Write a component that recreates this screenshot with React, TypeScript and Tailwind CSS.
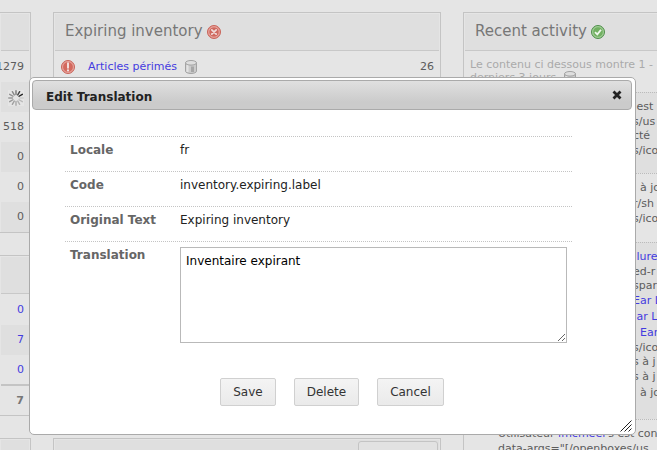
import type { ReactNode } from "react";

function Panel({ children, className = "" }: { children?: ReactNode; className?: string }) {
  return (
    <section className={`shrink-0 border border-[#c4c4c4] px-px pt-px ${className}`}>{children}</section>
  );
}

function PanelHeader({ title, icon }: { title?: string; icon?: ReactNode }) {
  return (
    <header className="mb-px flex h-[37px] items-center gap-1 border-b border-[#c8c8c8] bg-[#dfdfdf] px-[10px]">
      {title && <h2 className="pb-[2px] text-[15px] whitespace-nowrap text-[#777]">{title}</h2>}
      {icon}
    </header>
  );
}

function ErrorIcon() {
  return (
    <svg className="size-[14px] shrink-0" viewBox="0 0 14 14" aria-hidden="true">
      <circle cx="7" cy="7" r="6.5" fill="#e08a80" stroke="#c8645a" />
      <circle cx="7" cy="7" r="5.2" fill="#cf6a60" stroke="#eab0aa" strokeWidth=".8" />
      <path d="M4.8 4.8l4.4 4.4M9.2 4.8L4.8 9.2" stroke="#f1dcda" strokeWidth="1.7" strokeLinecap="round" />
    </svg>
  );
}

function AlertIcon() {
  return (
    <svg className="size-[14px] shrink-0" viewBox="0 0 14 14" aria-hidden="true">
      <circle cx="7" cy="7" r="6.5" fill="#e08a80" stroke="#c8645a" />
      <circle cx="7" cy="7" r="5.4" fill="#d3695e" stroke="#eab0aa" strokeWidth=".8" />
      <path d="M7 3.2v4.6" stroke="#f4e4e2" strokeWidth="1.9" strokeLinecap="round" />
      <circle cx="7" cy="10.4" r="1.1" fill="#f4e4e2" />
    </svg>
  );
}

function AcceptIcon() {
  return (
    <svg className="size-[14px] shrink-0" viewBox="0 0 14 14" aria-hidden="true">
      <circle cx="7" cy="7" r="6.5" fill="#8fc084" stroke="#4f8f4a" />
      <circle cx="7" cy="7" r="5.3" fill="#72b062" stroke="#a9d39f" strokeWidth=".8" />
      <path d="M4 7.2l2.3 2.2L10 4.8" fill="none" stroke="#eef6ec" strokeWidth="1.8" />
    </svg>
  );
}

function DatabaseIcon({ className = "" }: { className?: string }) {
  return (
    <svg className={`inline-block h-[14px] w-[12px] shrink-0 ${className}`} viewBox="0 0 12 14" aria-hidden="true">
      <path d="M.5 2.8v8.4c0 1.2 2.4 2.3 5.5 2.3s5.5-1.1 5.5-2.3V2.8z" fill="#cbcbcb" stroke="#a3a3a3" />
      <path d="M2.500 5v7" stroke="#e4e4e4" strokeWidth="2" />
      <path d="M7.500 6.500v5.500" stroke="#a6a6a6" strokeWidth="3" />
      <ellipse cx="6" cy="2.8" rx="5.5" ry="2.3" fill="#dedede" stroke="#a3a3a3" />
    </svg>
  );
}

const spokes = [
  { angle: 0, color: "#777" },
  { angle: 30, color: "#444" },
  { angle: 60, color: "#222" },
  { angle: 90, color: "#ccc" },
  { angle: 120, color: "#bbb" },
  { angle: 150, color: "#b0b0b0" },
  { angle: 180, color: "#a8a8a8" },
  { angle: 210, color: "#a0a0a0" },
  { angle: 240, color: "#999" },
  { angle: 270, color: "#999" },
  { angle: 300, color: "#909090" },
  { angle: 330, color: "#888" },
];

function Spinner() {
  return (
    <svg className="size-4 shrink-0" viewBox="0 0 16 16" aria-hidden="true">
      <rect width="16" height="16" fill="#e5e5e5" />
      {spokes.map((s) => (
        <path
          key={s.angle}
          d="M8 .7v3.8"
          stroke={s.color}
          strokeWidth="1.4"
          strokeLinecap="round"
          transform={`rotate(${s.angle} 8 8)`}
        />
      ))}
    </svg>
  );
}

function CountRow({ children, className = "h-[30px]" }: { children: ReactNode; className?: string }) {
  return (
    <tr className={`${className} even:bg-[#dfdfdf]`}>
      <td>
        <div className="flex justify-end pt-px pr-[5px]">{children}</div>
      </td>
    </tr>
  );
}

const link = "text-[#443be0]";

function StockColumn() {
  return (
    <div className="flex w-[31px] shrink-0 flex-col gap-[22px] overflow-hidden">
      <Panel className="border-l-0">
        <PanelHeader />
        <table className="w-full table-fixed border-collapse">
          <tbody>
            <CountRow>1279</CountRow>
            <CountRow><Spinner /></CountRow>
            <CountRow>518</CountRow>
            <CountRow>0</CountRow>
            <CountRow>0</CountRow>
            <CountRow>0</CountRow>
          </tbody>
        </table>
      </Panel>
      <Panel className="border-l-0">
        <PanelHeader />
        <table className="w-full table-fixed border-collapse">
          <tbody>
            <CountRow><a href="#" className={link}>0</a></CountRow>
            <CountRow><a href="#" className={link}>7</a></CountRow>
            <CountRow className="h-[29px]"><a href="#" className={link}>0</a></CountRow>
          </tbody>
        </table>
        <div className="flex h-[31px] items-center justify-end border-t-2 border-[#c4c4c4] pt-px pr-[5px] font-bold text-[#777]">7</div>
      </Panel>
      <Panel className="border-l-0">
        <PanelHeader />
      </Panel>
    </div>
  );
}

function InventoryColumn() {
  return (
    <div className="flex min-w-0 flex-1 flex-col gap-[22px]">
      <Panel className="h-[404px]">
        <PanelHeader title="Expiring inventory" icon={<ErrorIcon />} />
        <div className="flex h-[30px] items-center pr-[5px] pl-[6px]">
          <AlertIcon />
          <a href="#" className={`ml-[13px] mr-[8px] whitespace-nowrap ${link}`}>Articles périmés</a>
          <DatabaseIcon />
          <span className="ml-auto pt-px">26</span>
        </div>
      </Panel>
      <Panel>
        <div className="flex h-[37px] justify-end bg-[#dfdfdf] px-px pt-px">
          <select aria-label="Filtre" className="h-6 w-20 appearance-none rounded-[3px] border border-[#c4c4c4] bg-[#e2e2e2]" />
        </div>
      </Panel>
    </div>
  );
}

type Line = { text: string; tall?: boolean; href?: boolean };

const entries: { size: string; lines: Line[] }[] = [
  {
    size: "min-h-[81px] bg-[#dfdfdf]",
    lines: [
      { text: "\u00a0est", tall: true },
      { text: "s/us" },
      { text: "cté" },
      { text: "s/ico", tall: true },
    ],
  },
  {
    size: "min-h-[69px]",
    lines: [
      { text: "\u00a0 à jo", tall: true },
      { text: "r/sh", tall: true },
      { text: "s/ico" },
    ],
  },
  {
    size: "min-h-[177px] bg-[#dfdfdf]",
    lines: [
      { text: "\u00a0lure", tall: true, href: true },
      { text: "ed-r" },
      { text: "spar" },
      { text: "Ear L", tall: true, href: true },
      { text: "\u00a0ar L", tall: true, href: true },
      { text: "\u00a0 Ear", tall: true, href: true },
      { text: "s/ico" },
      { text: "s à j" },
      { text: "s à j", tall: true },
      { text: "\u00a0 à jo", tall: true },
    ],
  },
];

function ActivityColumn() {
  return (
    <div className="w-[194px] shrink-0 overflow-hidden">
      <Panel className="min-h-full border-r-0 pr-0">
        <PanelHeader title="Recent activity" icon={<AcceptIcon />} />
        <p className="h-[40px] overflow-hidden pt-[6px] pl-[5px] leading-[13px] whitespace-nowrap text-[#aaa]">
          Le contenu ci dessous montre 1 -
          <br />
          derniers 3 jours <DatabaseIcon className="ml-1" />
        </p>
        <ul>
          {entries.map((entry, i) => (
            <li key={i} className={`border-t border-dotted border-[#bbb] pt-[6px] pl-[168px] ${entry.size}`}>
              {entry.lines.map((line, j) => (
                <div key={j} className={`whitespace-nowrap ${line.tall ? "leading-[16px]" : "leading-[14px]"}`}>
                  {line.href ? <a href="#" className={link}>{line.text}</a> : line.text}
                </div>
              ))}
            </li>
          ))}
          <li className="border-t border-dotted border-[#bbb] pt-[6px] pl-[33px] whitespace-nowrap">
            <div className="leading-[16px]">
              Utilisateur <a href="#" className={link}>imcmeel</a>'s est con
            </div>
            <div className="leading-[14px]">data-args="[/openboxes/us</div>
          </li>
        </ul>
      </Panel>
    </div>
  );
}

const cell = "flex min-h-[35px] border-t border-dotted border-[#c4c4c4] px-[5px] pt-[5px] leading-[16px]";
const label = "w-[110px] shrink-0 font-bold text-[#666]";
const button =
  "h-7 rounded-[2px] border border-[#d0d0d0] bg-linear-to-b from-[#f4f4f4] to-[#eaeaea] px-3 text-[12px] text-[#333]";

function TranslationDialog() {
  return (
    <div
      role="dialog"
      aria-labelledby="dialog-title"
      className="relative h-[358px] w-full rounded-[5px] border border-[#aaa] bg-white py-[2px] pr-[3px] pl-[2px] text-[12px] text-[#222]"
    >
      <div className="flex h-[30px] items-center justify-between rounded-[4px] border border-[#aaa] bg-linear-to-b from-[#e0e0e0] to-[#cbcbcb] to-75% pr-[8px] pl-[13px]">
        <h1 id="dialog-title" className="pt-[4px] font-bold">Edit Translation</h1>
        <button type="button" aria-label="Close" className="flex size-[12px] items-center justify-center">
          <svg className="size-[10px]" viewBox="0 0 10 10" aria-hidden="true">
            <path d="M1.5 1.5l7 7M8.5 1.5l-7 7" stroke="#222" strokeWidth="2.8" />
          </svg>
        </button>
      </div>
      <form className="pt-[26px]" onSubmit={(e) => e.preventDefault()}>
        <dl className="mr-[60px] ml-[33px]">
          <div className={cell}>
            <dt className={label}>Locale</dt>
            <dd>fr</dd>
          </div>
          <div className={cell}>
            <dt className={label}>Code</dt>
            <dd>inventory.expiring.label</dd>
          </div>
          <div className={cell}>
            <dt className={label}>Original Text</dt>
            <dd>Expiring inventory</dd>
          </div>
          <div className={cell}>
            <dt className={label}><label htmlFor="translation">Translation</label></dt>
            <dd className="flex flex-1">
              <textarea
                id="translation"
                defaultValue="Inventaire expirant"
                className="h-24 flex-1 resize border border-[#b9b9b9] bg-white p-[5px] leading-[16px] text-black outline-none"
              />
            </dd>
          </div>
        </dl>
        <div className="mt-[35px] flex justify-center gap-[18px]">
          <button type="submit" className={button}>Save</button>
          <button type="button" className={button}>Delete</button>
          <button type="button" className={button}>Cancel</button>
        </div>
      </form>
      <svg className="absolute right-[3px] bottom-[2px] size-3" viewBox="0 0 12 12" aria-hidden="true">
        <path d="M.5 11.5l11-11M4.500 11.500l7-7M8.500 11.500l3-3" stroke="#222" strokeWidth="1" />
      </svg>
    </div>
  );
}

export default function App() {
  return (
    <div className="relative h-screen overflow-hidden bg-[#e5e5e5] font-['DejaVu_Sans',sans-serif] text-[11px] text-[#5c5c5c]">
      <main className="flex h-full gap-[22px] overflow-hidden pt-3">
        <StockColumn />
        <InventoryColumn />
        <ActivityColumn />
      </main>
      <div className="absolute inset-0 pt-[77px] pr-[21px] pl-[29px]">
        <TranslationDialog />
      </div>
    </div>
  );
}
